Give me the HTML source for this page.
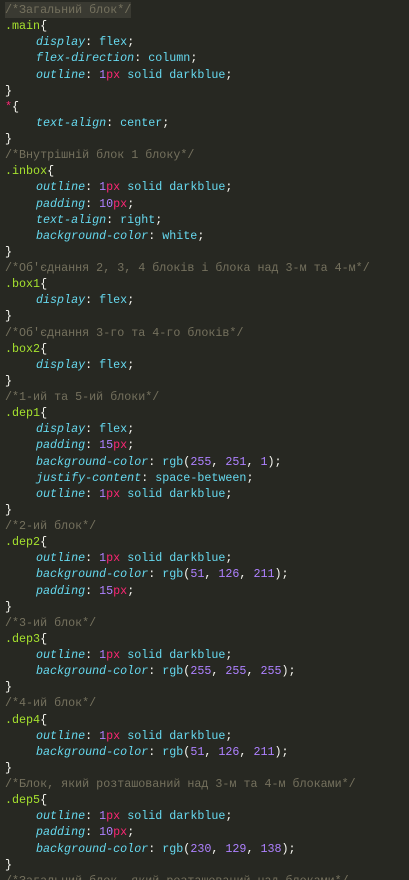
<!DOCTYPE html>
<html><head><meta charset="utf-8"><style>
html,body{margin:0;padding:0;background:#272822;width:409px;height:880px;overflow:hidden}
pre{margin:0;padding:2px 0 0 5px;font-family:"Liberation Mono","DejaVu Sans Mono",monospace;font-size:11.7px;line-height:16.12px;color:#f8f8f2;white-space:pre}
.c{color:#75715e}.s{color:#a6e22e}.p{color:#66d9ef;font-style:italic}.v{color:#66d9ef}.n{color:#ae81ff}.u{color:#f92672}
.hl{background:#3a3a32;display:inline-block}
i.t{display:inline-block;width:31px;font-style:normal}
</style></head><body><pre><span class="c hl">/*Загальний блок*/</span>
<span class="s">.main</span>{
<i class="t"></i><span class="p">display</span>: <span class="v">flex</span>;
<i class="t"></i><span class="p">flex-direction</span>: <span class="v">column</span>;
<i class="t"></i><span class="p">outline</span>: <span class="n">1</span><span class="u">px</span> <span class="v">solid darkblue</span>;
}
<span class="u">*</span>{
<i class="t"></i><span class="p">text-align</span>: <span class="v">center</span>;
}
<span class="c">/*Внутрішній блок 1 блоку*/</span>
<span class="s">.inbox</span>{
<i class="t"></i><span class="p">outline</span>: <span class="n">1</span><span class="u">px</span> <span class="v">solid darkblue</span>;
<i class="t"></i><span class="p">padding</span>: <span class="n">10</span><span class="u">px</span>;
<i class="t"></i><span class="p">text-align</span>: <span class="v">right</span>;
<i class="t"></i><span class="p">background-color</span>: <span class="v">white</span>;
}
<span class="c">/*Об'єднання 2, 3, 4 блоків і блока над 3-м та 4-м*/</span>
<span class="s">.box1</span>{
<i class="t"></i><span class="p">display</span>: <span class="v">flex</span>;
}
<span class="c">/*Об'єднання 3-го та 4-го блоків*/</span>
<span class="s">.box2</span>{
<i class="t"></i><span class="p">display</span>: <span class="v">flex</span>;
}
<span class="c">/*1-ий та 5-ий блоки*/</span>
<span class="s">.dep1</span>{
<i class="t"></i><span class="p">display</span>: <span class="v">flex</span>;
<i class="t"></i><span class="p">padding</span>: <span class="n">15</span><span class="u">px</span>;
<i class="t"></i><span class="p">background-color</span>: <span class="v">rgb</span>(<span class="n">255</span>, <span class="n">251</span>, <span class="n">1</span>);
<i class="t"></i><span class="p">justify-content</span>: <span class="v">space-between</span>;
<i class="t"></i><span class="p">outline</span>: <span class="n">1</span><span class="u">px</span> <span class="v">solid darkblue</span>;
}
<span class="c">/*2-ий блок*/</span>
<span class="s">.dep2</span>{
<i class="t"></i><span class="p">outline</span>: <span class="n">1</span><span class="u">px</span> <span class="v">solid darkblue</span>;
<i class="t"></i><span class="p">background-color</span>: <span class="v">rgb</span>(<span class="n">51</span>, <span class="n">126</span>, <span class="n">211</span>);
<i class="t"></i><span class="p">padding</span>: <span class="n">15</span><span class="u">px</span>;
}
<span class="c">/*3-ий блок*/</span>
<span class="s">.dep3</span>{
<i class="t"></i><span class="p">outline</span>: <span class="n">1</span><span class="u">px</span> <span class="v">solid darkblue</span>;
<i class="t"></i><span class="p">background-color</span>: <span class="v">rgb</span>(<span class="n">255</span>, <span class="n">255</span>, <span class="n">255</span>);
}
<span class="c">/*4-ий блок*/</span>
<span class="s">.dep4</span>{
<i class="t"></i><span class="p">outline</span>: <span class="n">1</span><span class="u">px</span> <span class="v">solid darkblue</span>;
<i class="t"></i><span class="p">background-color</span>: <span class="v">rgb</span>(<span class="n">51</span>, <span class="n">126</span>, <span class="n">211</span>);
}
<span class="c">/*Блок, який розташований над 3-м та 4-м блоками*/</span>
<span class="s">.dep5</span>{
<i class="t"></i><span class="p">outline</span>: <span class="n">1</span><span class="u">px</span> <span class="v">solid darkblue</span>;
<i class="t"></i><span class="p">padding</span>: <span class="n">10</span><span class="u">px</span>;
<i class="t"></i><span class="p">background-color</span>: <span class="v">rgb</span>(<span class="n">230</span>, <span class="n">129</span>, <span class="n">138</span>);
}
<span class="c">/*Загальний блок, який розташований над блоками*/</span>
</pre></body></html>
